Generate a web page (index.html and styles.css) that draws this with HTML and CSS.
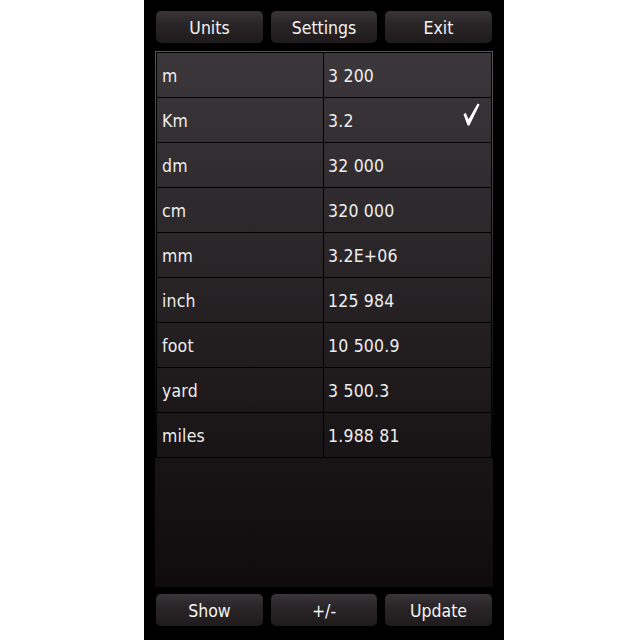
FILE: index.html
```html
<!DOCTYPE html>
<html>
<head>
<meta charset="utf-8">
<link rel="stylesheet" href="styles.css">
</head>
<body>
<div class="phone">
  <div class="toolbar">
    <div class="btn">Units</div>
    <div class="btn">Settings</div>
    <div class="btn">Exit</div>
  </div>
  <div class="panel">
    <div class="table">
      <div class="row"><div class="cell unit">m</div><div class="cell val">3 200</div></div>
      <div class="row"><div class="cell unit">Km</div><div class="cell val">3.2<svg class="check" width="18" height="24" viewBox="0 0 18 24"><path d="M0.5 11.5 L2.6 9.8 L5.6 16.2 L14.6 0.4 L16.6 1.4 L6.4 22.4 L4.6 22.4 Z" fill="#fff"/></svg></div></div>
      <div class="row"><div class="cell unit">dm</div><div class="cell val">32 000</div></div>
      <div class="row"><div class="cell unit">cm</div><div class="cell val">320 000</div></div>
      <div class="row"><div class="cell unit">mm</div><div class="cell val">3.2E+06</div></div>
      <div class="row"><div class="cell unit">inch</div><div class="cell val">125 984</div></div>
      <div class="row"><div class="cell unit">foot</div><div class="cell val">10 500.9</div></div>
      <div class="row"><div class="cell unit">yard</div><div class="cell val">3 500.3</div></div>
      <div class="row"><div class="cell unit">miles</div><div class="cell val">1.988 81</div></div>
    </div>
  </div>
  <div class="toolbar bottom">
    <div class="btn">Show</div>
    <div class="btn">+/-</div>
    <div class="btn">Update</div>
  </div>
</div>
</body>
</html>
```

FILE: styles.css
```css
html, body {
  margin: 0;
  padding: 0;
  background: #fff;
}
body {
  font-family: "DejaVu Sans Condensed", "DejaVu Sans", sans-serif;
  color: #f2f2f2;
}
.phone {
  box-sizing: border-box;
  width: 360px;
  height: 640px;
  margin-left: 144px;
  background: #000;
  padding: 11px 11px 0 11px;
  display: flex;
  flex-direction: column;
}
.toolbar {
  display: grid;
  grid-template-columns: 107px 106px 107px;
  gap: 8px;
  margin: 0 1px;
  height: 32px;
}
.toolbar.bottom {
  margin-top: 7px;
}
.btn {
  display: flex;
  align-items: center;
  justify-content: center;
  box-sizing: border-box;
  padding-top: 2px;
  border-radius: 5px;
  background: linear-gradient(#3a3538, #2a2628 40%, #1f1b1d);
  font-size: 17.5px;
  color: #f4f4f4;
}
.panel {
  margin-top: 8px;
  height: 536px;
  background: linear-gradient(#3c373a 0%, #1a1618 72%, #100c0e 100%);
}
.table {
  border: 1px solid;
  border-image: linear-gradient(#5c575a, #2a2628 60%, #000) 1;
  border-bottom: 0;
}
.row {
  display: grid;
  grid-template-columns: 167px 1fr;
  height: 45px;
  box-sizing: border-box;
  border-top: 1px solid #000;
}
.row:last-child {
  border-bottom: 1px solid #000;
  height: 46px;
}
.cell {
  display: flex;
  align-items: center;
  box-sizing: border-box;
  padding-top: 2px;
  font-size: 17.5px;
  letter-spacing: 0.2px;
  padding-left: 5px;
  border-left: 1px solid #000;
  color: #eeeeee;
}
.cell.val {
  padding-left: 4px;
  position: relative;
  border-right: 1px solid #000;
}
.check {
  position: absolute;
  right: 10px;
  top: 5px;
}
```
